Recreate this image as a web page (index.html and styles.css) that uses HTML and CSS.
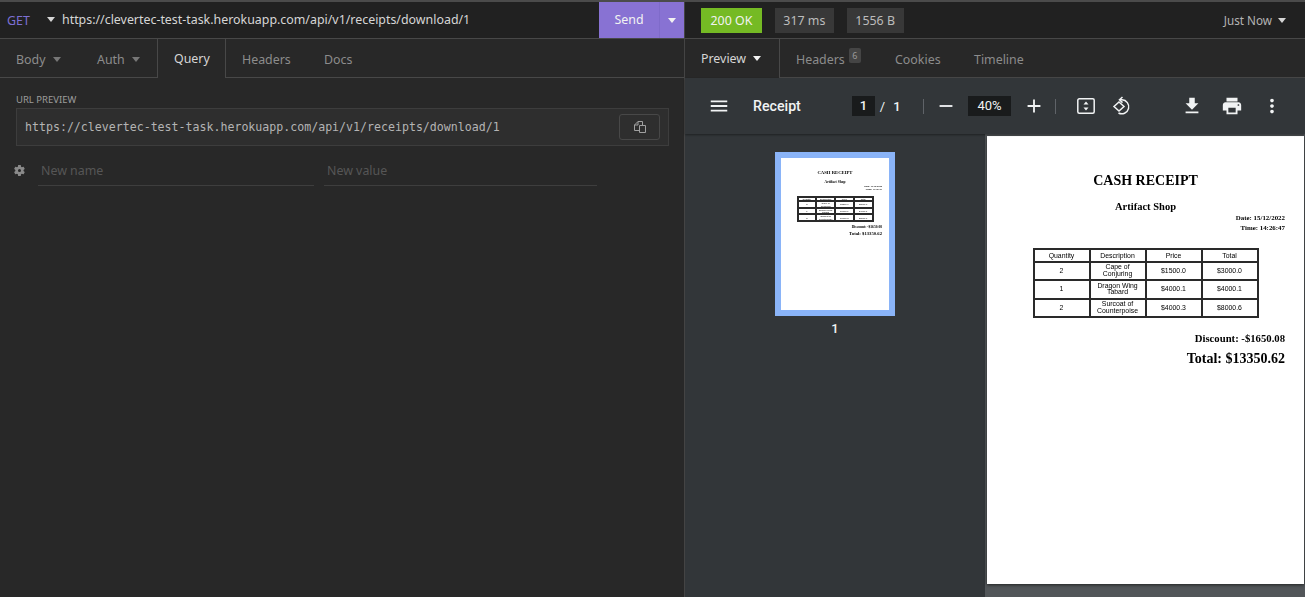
FILE: index.html
```html
<!DOCTYPE html>
<html>

<head>
    <title>Insomnia</title>
    <link rel="stylesheet" href="styles.css">
</head>

<body>
    <div class="app">
        <section class="pane request">
            <div class="bar">
                <span class="method">GET</span>
                <span class="caret caret-light method-caret"></span>
                <span class="url">https://clevertec-test-task.herokuapp.com/api/v1/receipts/download/1</span>
                <div class="send">
                    <span class="send-label">Send</span>
                    <span class="send-more"><span class="caret caret-white"></span></span>
                </div>
            </div>
            <div class="tabs">
                <div class="tab tab-body">Body<span class="caret caret-dim"></span></div>
                <div class="tab tab-auth">Auth<span class="caret caret-dim"></span></div>
                <div class="tab tab-query active">Query</div>
                <div class="tab tab-headers">Headers</div>
                <div class="tab tab-docs">Docs</div>
                <div class="tab-rest"></div>
            </div>
            <div class="query">
                <div class="url-label">URL PREVIEW</div>
                <div class="url-box">
                    <code class="url-full">https://clevertec-test-task.herokuapp.com/api/v1/receipts/download/1</code>
                    <button class="copy">
                        <svg width="14" height="14" viewBox="0 0 14 14" fill="none" stroke="#a0a0a0" stroke-width="1">
                            <path d="M6.500 5.500H12.500V12.500H6.500Z" />
                            <path d="M9.500 5.500V1.500H5L1.500 5V10.500H6.500" />
                            <path d="M5 1.500V5H1.500" />
                        </svg>
                    </button>
                </div>
                <div class="param">
                    <svg class="gear" width="13" height="13" viewBox="0 0 24 24">
                        <path fill="#8a8a8a" d="M19.4 13c0-.3.1-.6.1-1s0-.7-.1-1l2.1-1.600c.2-.2.2-.4.1-.6l-2-3.500c-.1-.2-.4-.3-.6-.2l-2.500 1c-.5-.4-1.100-.7-1.700-1L14.400 2.400c0-.2-.2-.4-.5-.4h-4c-.2 0-.5.200-.5.400L9 5.100c-.6.300-1.200.600-1.700 1l-2.500-1c-.2-.100-.5 0-.6.200l-2 3.500c-.1.200-.1.500.1.600L4.400 11c0 .3-.1.700-.1 1s0 .7.100 1l-2.100 1.600c-.2.200-.2.400-.1.600l2 3.500c.1.200.4.300.6.200l2.500-1c.5.400 1.100.7 1.700 1l.4 2.700c0 .2.200.4.500.4h4c.2 0 .5-.2.500-.4l.4-2.700c.6-.3 1.200-.6 1.700-1l2.500 1c.2.100.5 0 .6-.2l2-3.500c.1-.2.100-.5-.1-.6zM12 14.800a2.800 2.800 0 1 1 0-5.600 2.800 2.800 0 0 1 0 5.600z" />
                    </svg>
                    <span class="field field-name">New name</span>
                    <span class="field field-value">New value</span>
                </div>
            </div>
        </section>

        <section class="pane response">
            <div class="bar">
                <span class="chip chip-ok">200 OK</span>
                <span class="chip">317 ms</span>
                <span class="chip">1556 B</span>
                <span class="when">Just Now<span class="caret caret-light"></span></span>
            </div>
            <div class="tabs">
                <div class="tab tab-preview active">Preview<span class="caret caret-white"></span></div>
                <div class="tab tab-rheaders">Headers<span class="badge">6</span></div>
                <div class="tab tab-cookies">Cookies</div>
                <div class="tab tab-timeline">Timeline</div>
                <div class="tab-rest"></div>
            </div>
            <div class="viewer">
                <div class="toolbar">
                    <svg class="tool tool-menu" width="22" height="22" viewBox="0 0 24 24"><path d="M3 18h18v-2H3v2zm0-5h18v-2H3v2zm0-7v2h18V6H3z" /></svg>
                    <span class="doc-title">Receipt</span>
                    <span class="page-box">1</span>
                    <span class="page-sep">/</span>
                    <span class="page-total">1</span>
                    <span class="divider divider-a"></span>
                    <svg class="tool tool-minus" width="22" height="22" viewBox="0 0 24 24"><path d="M19 13H5v-2h14v2z" /></svg>
                    <span class="zoom-box">40%</span>
                    <svg class="tool tool-plus" width="22" height="22" viewBox="0 0 24 24"><path d="M19 13h-6v6h-2v-6H5v-2h6V5h2v6h6v2z" /></svg>
                    <span class="divider divider-b"></span>
                    <svg class="tool tool-fit" width="20" height="20" viewBox="0 0 20 20">
                        <rect x="1.800" y="2.800" width="16.400" height="14.400" rx="1.500" fill="none" stroke="#f1f3f4" stroke-width="1.500" />
                        <path d="M10 5.500l2.500 3h-5zM10 14.500l-2.500-3h5z" />
                    </svg>
                    <svg class="tool tool-rotate" width="20" height="20" viewBox="0 0 20 20" stroke="#f1f3f4" stroke-width="1.500">
                        <path d="M7 6l5 4.500L7 15l-5-4.500z" />
                        <path d="M8 3.800h2a7 7 0 1 1-3.500 13.200" />
                        <path d="M10.500 1L7.500 3.800l3 2.800" />
                    </svg>
                    <svg class="tool tool-download" width="22" height="22" viewBox="0 0 24 24"><path d="M19 9h-4V3H9v6H5l7 7 7-7zM5 18v2h14v-2H5z" /></svg>
                    <svg class="tool tool-print" width="22" height="22" viewBox="0 0 24 24"><path d="M19 8H5c-1.660 0-3 1.340-3 3v6h4v4h12v-4h4v-6c0-1.660-1.340-3-3-3zm-3 11H8v-5h8v5zm3-7c-.550 0-1-.450-1-1s.450-1 1-1 1 .450 1 1-.450 1-1 1zm-1-9H6v4h12V3z" /></svg>
                    <svg class="tool tool-more" width="22" height="22" viewBox="0 0 24 24"><path d="M12 8c1.100 0 2-.900 2-2s-.900-2-2-2-2 .900-2 2 .900 2 2 2zm0 2c-1.100 0-2 .900-2 2s.900 2 2 2 2-.900 2-2-.900-2-2-2zm0 6c-1.100 0-2 .900-2 2s.900 2 2 2 2-.900 2-2-.900-2-2-2z" /></svg>
                </div>
                <div class="viewer-body">
                    <aside class="thumbs">
                        <div class="thumb">
                            <div class="receipt mini">
                                <div class="r-title">CASH RECEIPT</div>
                                <div class="r-shop">Artifact Shop</div>
                                <div class="r-meta">Date: 15/12/2022</div>
                                <div class="r-meta">Time: 14:26:47</div>
                                <table class="r-table">
                                    <tr><td>Quantity</td><td>Description</td><td>Price</td><td>Total</td></tr>
                                    <tr><td>2</td><td>Cape of Conjuring</td><td>$1500.0</td><td>$3000.0</td></tr>
                                    <tr><td>1</td><td>Dragon Wing Tabard</td><td>$4000.1</td><td>$4000.1</td></tr>
                                    <tr><td>2</td><td>Surcoat of Counterpoise</td><td>$4000.3</td><td>$8000.6</td></tr>
                                </table>
                                <div class="r-discount">Discount: -$1650.08</div>
                                <div class="r-total">Total: $13350.62</div>
                            </div>
                        </div>
                        <div class="thumb-num">1</div>
                    </aside>
                    <main class="pages">
                        <div class="page">
                            <div class="receipt">
                                <div class="r-title">CASH RECEIPT</div>
                                <div class="r-shop">Artifact Shop</div>
                                <div class="r-meta">Date: 15/12/2022</div>
                                <div class="r-meta">Time: 14:26:47</div>
                                <table class="r-table">
                                    <tr><td>Quantity</td><td>Description</td><td>Price</td><td>Total</td></tr>
                                    <tr><td>2</td><td>Cape of<br>Conjuring</td><td>$1500.0</td><td>$3000.0</td></tr>
                                    <tr><td>1</td><td>Dragon Wing<br>Tabard</td><td>$4000.1</td><td>$4000.1</td></tr>
                                    <tr><td>2</td><td>Surcoat of<br>Counterpoise</td><td>$4000.3</td><td>$8000.6</td></tr>
                                </table>
                                <div class="r-discount">Discount: -$1650.08</div>
                                <div class="r-total">Total: $13350.62</div>
                            </div>
                        </div>
                    </main>
                </div>
            </div>
        </section>
    </div>
</body>

</html>
```

FILE: styles.css
```css
* {
    box-sizing: border-box;
}

html,
body {
    height: 100%;
}

body {
    margin: 0;
    overflow: hidden;
    background: #282828;
    font-family: "Noto Sans", "Open Sans", sans-serif;
    font-size: 12.400px;
    color: #a8a8a8;
}

.app {
    display: flex;
    height: 597px;
    border-top: 2px solid #4b4b4b;
}

.pane {
    display: flex;
    flex-direction: column;
    min-width: 0;
}

.request {
    width: 685px;
    border-right: 1px solid #444;
}

.response {
    width: 620px;
}

/* top bars */
.bar {
    display: flex;
    align-items: center;
    height: 37px;
    flex-shrink: 0;
    background: #212121;
    border-bottom: 1px solid #484848;
}

.method {
    margin-left: 7px;
    width: 40px;
    color: #7d70d4;
}

.method-caret {
    margin: 0 7px 2px 0;
}

.url {
    flex: 1;
    color: #d6d6d6;
    padding-bottom: 2px;
    white-space: nowrap;
}

.send {
    display: flex;
    align-self: stretch;
    width: 85px;
    background: #8872d3;
    color: #f2f2f2;
}

.send-label {
    width: 60px;
    line-height: 36px;
    text-align: center;
}

.send-more {
    display: flex;
    align-items: center;
    justify-content: center;
    flex: 1;
    border-left: 1px solid #7f6bca;
}

.caret {
    display: inline-block;
    width: 0;
    height: 0;
    border-left: 4px solid transparent;
    border-right: 4px solid transparent;
    border-top: 5px solid #777;
}

.caret-light {
    border-top-color: #d6d6d6;
}

.caret-white {
    border-top-color: #f2f2f2;
}

.response .bar {
    padding-left: 16px;
    padding-right: 19px;
    gap: 13px;
}

.chip {
    height: 25px;
    padding: 0 8.500px;
    line-height: 25px;
    background: #383838;
    color: #bcbcbc;
}

.chip-ok {
    padding: 0 9.500px;
    background: #75ba24;
    color: #f2f2f2;
}

.when {
    display: flex;
    align-items: center;
    gap: 6px;
    margin-left: auto;
    font-size: 11.700px;
    color: #b4b4b4;
}

/* tabs */
.tabs {
    display: flex;
    height: 39px;
    flex-shrink: 0;
    background: #282828;
}

.tab {
    display: flex;
    align-items: center;
    padding-top: 3px;
    border-bottom: 1px solid #484848;
    color: #8c8c8c;
    white-space: nowrap;
}

.tab .caret {
    margin-left: 7px;
}

.tab.active {
    padding-top: 1px;
    padding-bottom: 1px;
    color: #d6d6d6;
    border-bottom: none;
    border-right: 1px solid #484848;
}

.tab-rest {
    flex: 1;
    border-bottom: 1px solid #484848;
}

.tab-body {
    width: 80px;
    padding-left: 16px;
}

.tab-auth {
    width: 77px;
    padding-left: 17px;
}

.tab-query {
    width: 69px;
    padding-left: 16px;
    border-left: 1px solid #484848;
}

.tab-headers {
    width: 82px;
    padding-left: 16px;
}

.tab-docs {
    width: 60px;
    padding-left: 16px;
}

.tab-preview {
    width: 95px;
    padding-left: 16px;
}

.tab-rheaders {
    width: 99px;
    padding-left: 16px;
}

.tab-cookies {
    width: 79px;
    padding-left: 16px;
}

.tab-timeline {
    width: 80px;
    padding-left: 16px;
}

.badge {
    align-self: flex-start;
    width: 12px;
    height: 15px;
    margin: 6px 0 0 4px;
    background: #454545;
    border-radius: 2px;
    font-size: 9px;
    line-height: 15px;
    text-align: center;
    color: #9a9a9a;
}

/* query tab */
.query {
    flex: 1;
    padding: 15px 15px 0 16px;
}

.url-label {
    height: 15px;
    font-size: 9.500px;
    line-height: 13px;
    color: #9c9c9c;
}

.url-box {
    display: flex;
    align-items: center;
    justify-content: space-between;
    height: 38px;
    padding: 0 8px 0 8px;
    background: #2e2e2e;
    border: 1px solid #3d3d3d;
}

.url-full {
    font-family: "DejaVu Sans Mono", monospace;
    font-size: 11.600px;
    color: #b4b4b4;
}

.copy {
    display: flex;
    align-items: center;
    justify-content: center;
    width: 41px;
    height: 26px;
    padding: 0;
    background: none;
    border: 1px solid #484848;
    border-radius: 3px;
}

.param {
    display: flex;
    align-items: flex-start;
    margin: 16px 0 0 -3px;
}

.gear {
    margin: 2px 0 0;
}

.field {
    height: 24px;
    padding-left: 3px;
    line-height: 17px;
    border-bottom: 1px solid #3e3e3e;
    color: #565656;
}

.field-name {
    width: 276px;
    margin-left: 12px;
}

.field-value {
    width: 273px;
    margin-left: 10px;
}

/* pdf viewer */
.viewer {
    display: flex;
    flex-direction: column;
    flex: 1;
    min-height: 0;
}

.toolbar {
    display: flex;
    align-items: center;
    height: 56px;
    flex-shrink: 0;
    background: #323639;
    color: #f1f3f4;
    box-shadow: 0 1px 2px rgba(0, 0, 0, 0.4);
    position: relative;
    z-index: 1;
}

.tool {
    flex-shrink: 0;
    fill: #f1f3f4;
}

.tool-menu {
    margin-left: 23px;
}

.doc-title {
    margin-left: 23px;
    width: 99px;
    font-family: Roboto, sans-serif;
    font-size: 14.200px;
    font-weight: 500;
}

.page-box {
    width: 23px;
    height: 20px;
    background: #191b1c;
    text-align: center;
    font-family: Roboto, sans-serif;
    font-size: 13px;
    font-weight: 500;
    line-height: 20px;
}

.page-sep {
    width: 15px;
    text-align: center;
    font-family: Roboto, sans-serif;
    font-size: 13px;
}

.page-total {
    width: 14px;
    text-align: center;
    font-family: Roboto, sans-serif;
    font-size: 13px;
    font-weight: 500;
}

.divider {
    width: 1px;
    height: 15px;
    background: #5f6368;
}

.divider-a {
    margin-left: 19px;
}

.tool-minus {
    margin-left: 11px;
}

.zoom-box {
    width: 43px;
    height: 20px;
    margin-left: 11px;
    background: #191b1c;
    text-align: center;
    font-family: Roboto, sans-serif;
    font-size: 13px;
    line-height: 20px;
}

.tool-plus {
    margin-left: 12px;
}

.divider-b {
    margin-left: 10px;
}

.tool-fit {
    margin-left: 20px;
}

.tool-rotate {
    margin-left: 16px;
    fill: none;
}

.tool-download {
    margin-left: 49px;
}

.tool-print {
    margin-left: 18px;
}

.tool-more {
    margin-left: 18px;
}

.viewer-body {
    display: flex;
    flex: 1;
    min-height: 0;
}

.thumbs {
    display: flex;
    flex-direction: column;
    align-items: center;
    width: 300px;
    padding-top: 18px;
    background: #323639;
}

.thumb {
    width: 120px;
    height: 164px;
    border: 6px solid #8ab4f8;
    background: #fff;
    overflow: hidden;
}

.thumb-num {
    margin-top: 5px;
    font-family: Roboto, sans-serif;
    font-size: 13px;
    font-weight: 500;
    color: #f1f3f4;
}

.pages {
    flex: 1;
    padding: 2px 1px 0 2px;
    background: #525659;
}

.page {
    height: 448px;
    background: #fff;
    box-shadow: 0 1px 3px rgba(0, 0, 0, 0.6);
}

/* the receipt itself */
.receipt {
    padding: 36px 19px 0;
    color: #000;
    font-family: "Liberation Serif", serif;
    font-weight: 700;
    filter: blur(0.25px);
}

.r-title {
    font-size: 14px;
    line-height: 17px;
    text-align: center;
}

.r-shop {
    margin-top: 11px;
    font-size: 10.500px;
    line-height: 13px;
    text-align: center;
}

.r-meta {
    font-size: 6.900px;
    line-height: 10px;
    text-align: right;
}

.r-table {
    width: 226px;
    margin: 15px auto 0;
    border-collapse: collapse;
    table-layout: fixed;
}

.r-table td {
    padding: 0;
    border: 2px solid #2a2a2a;
    font-family: "Liberation Sans", sans-serif;
    font-size: 6.900px;
    font-weight: 400;
    line-height: 6.500px;
    text-align: center;
}

.r-table tr {
    height: 18.500px;
}

.r-table tr:first-child {
    height: 12.500px;
}

.r-table tr:first-child td {
    padding-top: 2px;
}

.r-discount {
    margin-top: 13px;
    font-size: 10.700px;
    line-height: 14px;
    text-align: right;
}

.r-total {
    margin-top: 5px;
    font-size: 14px;
    line-height: 17px;
    text-align: right;
}

.mini {
    padding: 12px 7px 0;
    filter: blur(0.35px);
}

.mini .r-title {
    font-size: 4.700px;
    line-height: 6px;
}

.mini .r-shop {
    margin-top: 4px;
    font-size: 3.600px;
    line-height: 5px;
}

.mini .r-meta {
    font-size: 2.500px;
    line-height: 3px;
}

.mini .r-table {
    width: 77px;
    margin-top: 5px;
}

.mini .r-table td {
    font-size: 2.300px;
    line-height: 2.300px;
}

.mini .r-table tr {
    height: 6px;
}

.mini .r-table tr:first-child {
    height: 4px;
}

.mini .r-table tr:first-child td {
    padding-top: 0;
}

.mini .r-discount {
    margin-top: 3px;
    font-size: 3.600px;
    line-height: 5px;
}

.mini .r-total {
    margin-top: 1px;
    font-size: 4.700px;
    line-height: 6px;
}
```
